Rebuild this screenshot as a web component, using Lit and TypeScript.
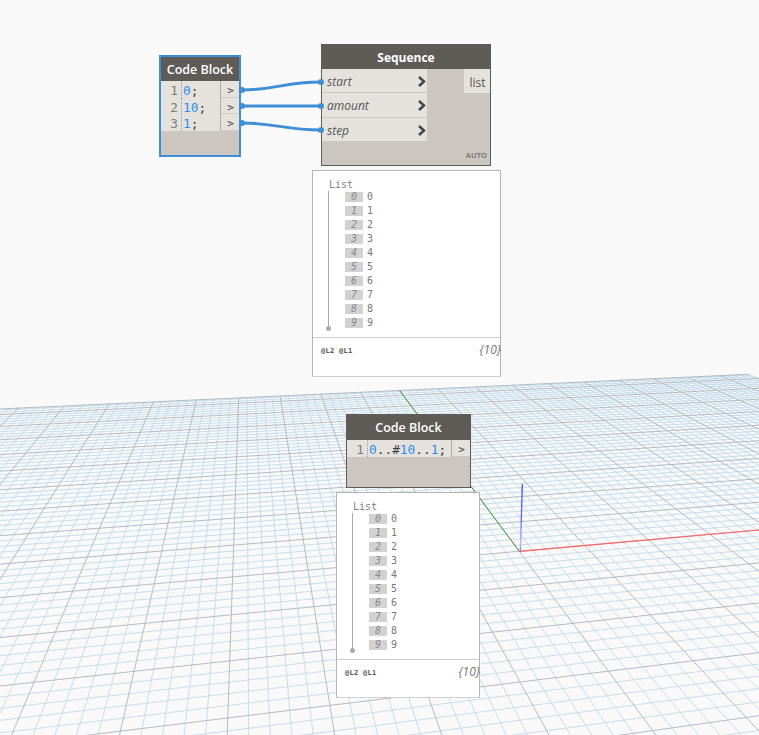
import { LitElement, html, css, svg } from "lit";
import { customElement, property } from "lit/decorators.js";

const UI = css`"Open Sans", "Noto Sans", sans-serif`;
const MONO = css`"DejaVu Sans Mono", "Liberation Mono", monospace`;

@customElement("code-block-node")
class CodeBlockNode extends LitElement {
  @property({ type: Array }) lines: string[][] = [];
  @property({ type: Boolean }) selected = false;
  static styles = css`
    :host { display: block; height: 100%; }
    .node { box-sizing: border-box; height: 100%; display: flex; flex-direction: column; background: #cbc7c0; border: 1px solid #5f5b57; }
    .node.sel { border: 2px solid #3f8fd6; }
    .head { height: 25px; flex: none; background: #5f5b57; color: #fff; display: flex; align-items: center; justify-content: center; font: 600 12.5px ${UI}; }
    .sel .head { height: 24px; }
    .row { height: 16.5px; overflow: hidden; display: flex; background: #e5e1dc; color: #3c3c3c; font: 12.8px/19px ${MONO}; }
    .n { width: 17px; flex: none; text-align: right; color: #7b7b7b; border-right: 1px dotted #a09c96; padding-right: 3px; box-sizing: content-box; }
    .code { flex: 1; padding-left: 1px; white-space: pre; border-right: 1px solid #b0aca6; }
    .b { color: #2a8cf2; }
    .port { width: 17px; padding-left: 1px; flex: none; text-align: center; font: 11px/19px ${MONO}; color: #444; box-shadow: inset 0 -1px 0 #cfcbc5; }
  `;
  render() {
    return html`<div class="node ${this.selected ? "sel" : ""}">
      <div class="head">Code Block</div>
      ${this.lines.map(
        (parts, i) => html`<div class="row">
          <span class="n">${i + 1}</span>
          <span class="code">${parts.map((p) => (/^[0-9]+$/.test(p) ? html`<span class="b">${p}</span>` : p))}</span>
          <span class="port">&gt;</span>
        </div>`
      )}
    </div>`;
  }
}

@customElement("sequence-node")
class SequenceNode extends LitElement {
  static styles = css`
    :host { display: block; height: 100%; }
    .node { box-sizing: border-box; height: 100%; display: flex; flex-direction: column; background: #cbc7c0; border: 1px solid #5f5b57; position: relative; }
    .head { height: 24px; flex: none; background: #5f5b57; color: #fff; display: flex; align-items: center; justify-content: center; font: 700 12px ${UI}; }
    .body { flex: 1; display: flex; justify-content: space-between; align-items: flex-start; }
    .inputs { width: 105px; display: flex; flex-direction: column; }
    .in { height: 24.3px; box-sizing: border-box; display: flex; align-items: center; justify-content: space-between; padding: 2px 1px 0 5px; background: #e5e1dc; border-bottom: 1px solid #cbc7c0; font: italic 12px ${UI}; color: #555; }
    .in svg { display: block; }
    .out { width: 25px; padding-left: 1px; height: 24px; background: #e5e1dc; font: 12px/27px ${UI}; color: #555; text-align: center; }
    .auto { position: absolute; right: 3px; bottom: 5px; font: 700 7.5px ${UI}; color: #7d7972; }
  `;
  render() {
    return html`<div class="node">
      <div class="head">Sequence</div>
      <div class="body">
        <div class="inputs">
          ${["start", "amount", "step"].map(
            (s) => html`<div class="in"><span>${s}</span>
              <svg width="9" height="11" viewBox="0 0 9 11"><path d="M2 1l5 4.5-5 4.5" fill="none" stroke="#444" stroke-width="2.4"/></svg>
            </div>`
          )}
        </div>
        <div class="out">list</div>
      </div>
      <div class="auto">AUTO</div>
    </div>`;
  }
}

@customElement("watch-panel")
class WatchPanel extends LitElement {
  @property({ type: Number }) count = 10;
  static styles = css`
    :host { display: block; height: 100%; }
    .panel { box-sizing: border-box; height: 100%; display: flex; flex-direction: column; background: #fff; border: 1px solid #b4b4b4; border-bottom-color: #cfcfcf; }
    .list { flex: none; height: 167px; box-sizing: border-box; padding: 8px 0 0 15px; border-bottom: 1px solid #cfcfcf; }
    .title { font: 10px/12px ${MONO}; color: #80808a; padding-left: 1px; height: 12px; }
    .tree { position: relative; border-left: 1px solid #aaa; height: 138px; box-sizing: border-box; padding: 1px 0 0 16px; display: flex; flex-direction: column; gap: 4px; }
    .tree::after { content: ""; position: absolute; left: -3px; bottom: -2px; width: 5px; height: 5px; border-radius: 50%; background: #aaa; }
    .item { display: flex; gap: 4px; height: 10px; align-items: center; font: 10px/10px ${MONO}; color: #777; }
    .idx { width: 18px; height: 10px; background: #d2d2d2; color: #8a8a8a; text-align: center; font-style: italic; }
    .foot { flex: 1; display: flex; justify-content: space-between; align-items: flex-start; padding: 2px 0 0 8px; }
    .lv { font: 700 7px/20px ${MONO}; color: #555; padding-top: 1px; letter-spacing: 0.3px; }
    .c { font: italic 12px/20px ${UI}; color: #777; margin-right: -1px; }
  `;
  render() {
    const items = Array.from({ length: this.count }, (_, i) => i);
    return html`<div class="panel">
      <div class="list">
        <div class="title">List</div>
        <div class="tree">
          ${items.map((i) => html`<div class="item"><span class="idx">${i}</span><span>${i}</span></div>`)}
        </div>
      </div>
      <div class="foot"><span class="lv">@L2 @L1</span><span class="c">{${this.count}}</span></div>
    </div>`;
  }
}

/* ground plane homography */
const O = [519.3, 551.3], V1 = [246, 184], V2 = [4400, 205], A = 0.0172, B = 0.082;
const proj = (u: number, v: number) => {
  const w = 1 + u * A + v * B;
  return [(u * A * V2[0] + v * B * V1[0] + O[0]) / w, (u * A * V2[1] + v * B * V1[1] + O[1]) / w];
};
const UMIN = -20, UMAX = 9.87, VMIN = -10, VMAX = 9.5;
function seg(a: number[], b: number[]) {
  return `M${a[0].toFixed(1)} ${a[1].toFixed(1)}L${b[0].toFixed(1)} ${b[1].toFixed(1)}`;
}
function gridPaths() {
  let minor = "", major = "";
  const ulo = (v: number) => Math.max(UMIN, (0.12 - 1 - v * B) / A);
  const vlo = (u: number) => Math.max(VMIN, (0.12 - 1 - u * A) / B);
  for (let t = UMIN * 5; t <= Math.floor(UMAX * 5); t++) {
    const u = t / 5;
    const d = seg(proj(u, vlo(u)), proj(u, VMAX));
    if (t % 5 === 0) major += d; else minor += d;
  }
  for (let t = VMIN * 5; t <= Math.floor(VMAX * 5); t++) {
    const v = t / 5;
    if (ulo(v) >= UMAX) continue;
    const d = seg(proj(ulo(v), v), proj(UMAX, v));
    if (t % 5 === 0) major += d; else minor += d;
  }
  minor += seg(proj(UMAX, vlo(UMAX)), proj(UMAX, VMAX));
  major += seg(proj(ulo(VMAX), VMAX), proj(UMAX, VMAX));
  return { minor, major };
}

const WIRES = [
  "M242 90C275 90 285 82 321 82",
  "M242 106L321 106",
  "M242 123C275 123 285 130 321 130",
];
const DOTS = [[242, 90], [321, 82], [242, 106], [321, 106], [242, 123], [321, 130]];
const box = (x: number, y: number, w: number, h: number) => `left:${x}px;top:${y}px;width:${w}px;height:${h}px`;

@customElement("app-root")
class AppRoot extends LitElement {
  static styles = css`
    :host { display: block; width: 759px; height: 735px; position: relative; overflow: hidden; background: #f9f9f9; }
    .layer { position: absolute; left: 0; top: 0; }
    .at { position: absolute; }
  `;
  render() {
    const g = gridPaths();
    const far = proj(0, VMAX);
    return html`
      <svg class="layer" width="759" height="735" viewBox="0 0 759 735">
        ${svg`<defs><linearGradient id="zAxis" gradientUnits="userSpaceOnUse" x1="521" y1="484" x2="519.3" y2="551.3">
          <stop offset="0" stop-color="#4a4af5"/><stop offset="0.55" stop-color="#6a6af8"/><stop offset="0.88" stop-color="#b8b8fb"/><stop offset="1" stop-color="#7a7af5"/>
        </linearGradient></defs>
        <path d=${g.minor} fill="none" stroke="#c2daea" stroke-width="0.9"/>
        <path d=${g.major} fill="none" stroke="#aab6bd" stroke-width="0.9"/>
        <path d="M519.3 551.3L${far[0]} ${far[1]}" stroke="#3d9a3d" stroke-width="1" fill="none"/>
        <path d="M519.3 551.3L759 530" stroke="#ff6060" stroke-width="1.2" fill="none"/>
        <rect x="519.7" y="484" width="1.3" height="67.3" fill="url(#zAxis)" transform="rotate(1.7 520 551)"/>`}
      </svg>
      <div class="at" style=${box(159, 55, 82, 102)}>
        <code-block-node selected .lines=${[["0", ";"], ["10", ";"], ["1", ";"]]}></code-block-node>
      </div>
      <div class="at" style=${box(321, 44, 170, 122)}><sequence-node></sequence-node></div>
      <svg class="layer" width="759" height="735" viewBox="0 0 759 735">
        ${WIRES.map((d) => svg`<path d=${d} fill="none" stroke="#3f8fd6" stroke-width="3"/>`)}
        ${DOTS.map(([x, y]) => svg`<circle cx=${x} cy=${y} r="3" fill="#3f8fd6"/>`)}
      </svg>
      <div class="at" style=${box(312, 170, 189, 207)}><watch-panel></watch-panel></div>
      <div class="at" style=${box(346, 414, 125, 74)}>
        <code-block-node .lines=${[["0", "..#", "10", "..", "1", ";"]]}></code-block-node>
      </div>
      <div class="at" style=${box(336, 492, 144, 206)}><watch-panel></watch-panel></div>
    `;
  }
}
